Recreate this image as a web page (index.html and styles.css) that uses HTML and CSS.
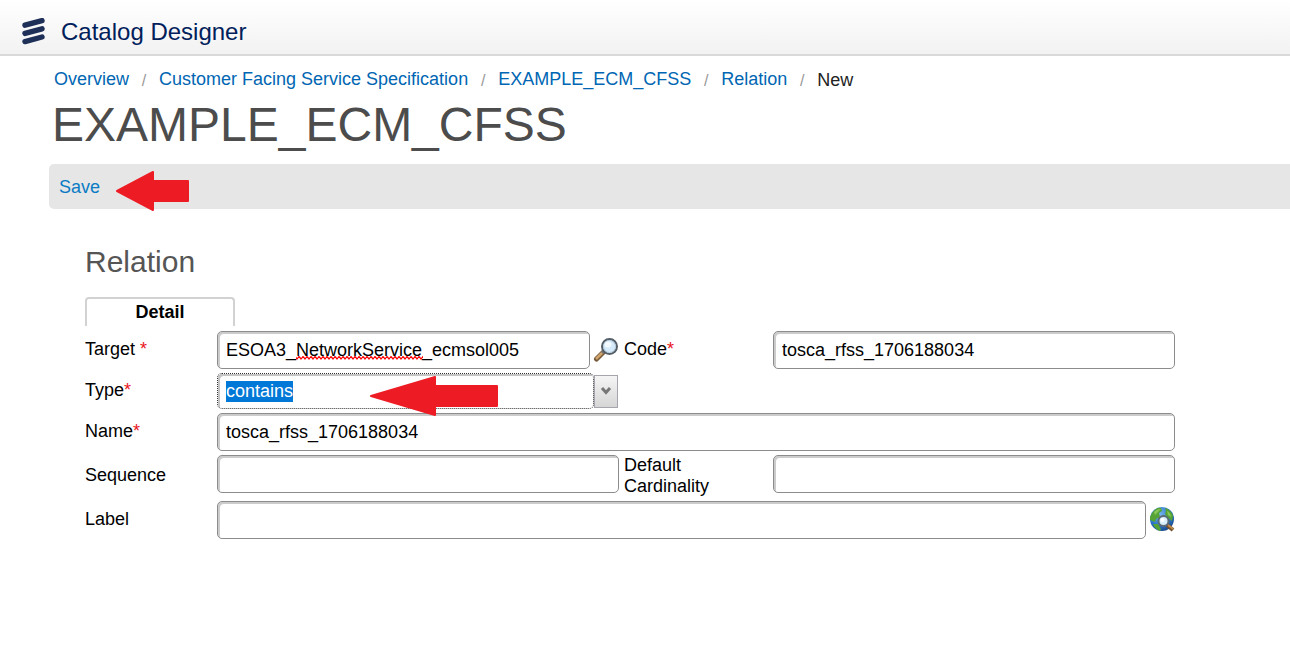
FILE: index.html
```html
<!DOCTYPE html>
<html lang="en">
<head>
<meta charset="utf-8">
<title>Catalog Designer</title>
<link rel="stylesheet" href="styles.css">
</head>
<body>
<header class="topbar">
  <svg class="logo" width="24" height="28" viewBox="0 0 24 28" aria-hidden="true">
    <g stroke="#1f3058" stroke-width="5.4" stroke-linecap="round">
      <path d="M4 7.200 21 2.600M4 15.400 21 10.800M4 23.600 21 19"/>
    </g>
  </svg>
  <span class="product">Catalog Designer</span>
</header>

<main class="page">
  <nav class="crumbs" aria-label="Breadcrumb">
    <a href="#">Overview</a><span class="sep">/</span>
    <a href="#">Customer Facing Service Specification</a><span class="sep">/</span>
    <a href="#">EXAMPLE_ECM_CFSS</a><span class="sep">/</span>
    <a href="#">Relation</a><span class="sep">/</span>
    <span class="current">New</span>
  </nav>
  <h1 class="title">EXAMPLE_ECM_CFSS</h1>

  <div class="toolbar">
    <button class="save" type="button">Save</button>
    <svg class="arrow arrow-save" width="73" height="40" viewBox="0 0 73 40" aria-hidden="true">
      <path d="M1 20 37 1V10H72V30H37V39Z" fill="#ed1c24" stroke="#ed1c24" stroke-width="2" stroke-linejoin="round"/>
    </svg>
  </div>

  <section class="panel">
    <h2 class="subtitle">Relation</h2>
    <button class="tab" type="button">Detail</button>

    <form class="form">
      <label for="target">Target <span class="req">*</span></label>
      <div class="field">
        <div class="spell">
          <input class="text" id="target" type="text" value="ESOA3_NetworkService_ecmsol005" spellcheck="false">
          <svg class="squiggle" width="127" height="4" aria-hidden="true">
            <defs><pattern id="wave" width="4" height="4" patternUnits="userSpaceOnUse"><path d="M-1 0 1 3 3 .5 5 3" fill="none" stroke="#f00" stroke-width="1.2"/></pattern></defs>
            <rect width="127" height="4" fill="url(#wave)"/>
          </svg>
        </div>
        <button class="icon" type="button" aria-label="Find target">
          <svg width="26" height="26" viewBox="0 0 26 26">
            <path d="M10 15.500 3.500 22" stroke="#76583a" stroke-width="5" stroke-linecap="round"/>
            <path d="M9.500 15.500 3 22" stroke="#d0a56b" stroke-width="2.500"/>
            <path d="m9 16 3-3" stroke="#777" stroke-width="3"/>
            <circle cx="16.500" cy="9.500" r="7.500" fill="#d5eafa" stroke="#555e66" stroke-width="2"/>
            <circle cx="16.500" cy="9.500" r="6" fill="none" stroke="#b2cadb" stroke-width="1"/>
            <ellipse cx="15" cy="7.500" rx="3.500" ry="3" fill="#f3faff"/>
          </svg>
        </button>
      </div>
      <label class="second" for="code">Code<span class="req">*</span></label>
      <div class="field"><input class="text" id="code" type="text" value="tosca_rfss_1706188034"></div>

      <label for="type">Type<span class="req">*</span></label>
      <div class="field combo">
        <input class="text active" id="type" type="text" value="contains" role="combobox" aria-expanded="false">
        <button class="drop" type="button" aria-label="Show types">
          <svg width="12" height="10" viewBox="0 0 12 10"><path d="m2 2 4 4.500L10 2" fill="none" stroke="#777" stroke-width="3"/></svg>
        </button>
        <svg class="arrow arrow-type" width="128" height="40" viewBox="0 0 128 40" aria-hidden="true">
          <path d="M1 20 65 1V10H127V30H65V39Z" fill="#ed1c24" stroke="#ed1c24" stroke-width="2" stroke-linejoin="round"/>
        </svg>
      </div>

      <label class="first" for="name">Name<span class="req">*</span></label>
      <div class="field wide"><input class="text" id="name" type="text" value="tosca_rfss_1706188034"></div>

      <label for="sequence">Sequence</label>
      <div class="field high"><input class="text" id="sequence" type="text"></div>
      <label class="second lines" for="cardinality">Default<br>Cardinality</label>
      <div class="field high"><input class="text" id="cardinality" type="text"></div>

      <label class="first" for="label">Label</label>
      <div class="field wide">
        <input class="text" id="label" type="text">
        <button class="icon" type="button" aria-label="Translate label">
          <svg width="26" height="26" viewBox="0 0 26 26">
            <defs><radialGradient id="sea" cx=".4" cy=".3" r=".8"><stop offset="0" stop-color="#78b9ee"/><stop offset=".6" stop-color="#2873c8"/><stop offset="1" stop-color="#153d78"/></radialGradient></defs>
            <circle cx="13" cy="12" r="12" fill="url(#sea)"/>
            <path d="M3 6C6 2 9 0 12 1l1 3-3 2 1 4-4 2-1 3-5-2 0-3ZM16 1c4 1 7 4 8 8l-1 5-4-3-3-4 1-3ZM4 17l5 0 3 5-1 2c-3-1-6-4-7-7Z" fill="#55a336"/>
            <path d="M5 5c2-2 4-3 7-3L9 5l-3 3ZM18 4c2 1 4 3 4 6l-3-2Z" fill="#8ac65a"/>
            <path d="m18 18 6 5" stroke="#70502c" stroke-width="4"/>
            <path d="m19 18 5 4" stroke="#c18a4b" stroke-width="2"/>
            <circle cx="14.500" cy="14" r="5" fill="#d7effb" stroke="#5b6b75" stroke-width="2"/>
            <circle cx="13.500" cy="13" r="2" fill="#fff"/>
          </svg>
        </button>
      </div>
    </form>
  </section>
</main>
<script src="app.js"></script>
</body>
</html>
```
FILE: styles.css
```css
* { box-sizing: border-box; }
body {
  margin: 0;
  background: #fff;
  color: #000;
  font: 18px/21px "Liberation Sans", Arial, sans-serif;
}
button, input { font: inherit; }
button { padding: 0; border: 0; background: none; cursor: pointer; }
svg { display: block; }

.topbar {
  display: flex;
  align-items: center;
  gap: 16px;
  height: 56px;
  padding: 10px 21px 0;
  border-bottom: 2px solid #d9d9d9;
  background: linear-gradient(#fff, #f2f2f2);
}
.product { color: #00205b; font-size: 24px; line-height: 28px; }

.page { padding-left: 49px; }
.crumbs { display: flex; padding: 13px 5px 0; }
.crumbs a { color: #0066b3; text-decoration: none; }
.sep { width: 30px; color: #999; font-size: 16px; line-height: 24px; text-align: center; }
.current { color: #222; line-height: 23px; }
.title {
  margin: 4px 0 11px 3px;
  color: #4c4c4c;
  font-size: 48px;
  font-weight: 400;
  line-height: 56px;
}
.toolbar {
  position: relative;
  display: flex;
  align-items: center;
  height: 45px;
  padding: 1px 0 0 10px;
  border-radius: 5px 0 0 5px;
  background: #e6e6e6;
}
.save { color: #0a7bc4; }
.arrow { position: absolute; pointer-events: none; }
.arrow-save { left: 67px; top: 7px; }

.panel { padding: 36px 115px 36px 36px; }
.subtitle {
  margin: 0 0 18px;
  color: #555;
  font-size: 30px;
  font-weight: 400;
  line-height: 34px;
}
.tab {
  display: block;
  width: 150px;
  height: 29px;
  border: 2px solid #d2d2d2;
  border-bottom: 0;
  border-radius: 4px 4px 0 0;
  color: #000;
  font-weight: 700;
}

.form {
  display: grid;
  grid-template-columns: 132px 1fr 154px 1fr;
  align-items: center;
  row-gap: 4px;
  margin-top: 5px;
}
.form label { padding-bottom: 2px; }
.form .lines { padding-bottom: 0; }
.first { grid-column: 1; }
.second { padding-left: 5px; }
.req { color: #e8141c; }
.field { display: flex; align-items: center; gap: 3px; min-width: 0; }
.wide { grid-column: 2 / -1; }
.high { align-self: start; }
.text {
  flex: 1;
  width: 100%;
  min-width: 0;
  height: 38px;
  padding: 0 8px;
  border: 1px solid #8c8c8c;
  border-radius: 5px;
  outline: 0;
  background: #fff;
  box-shadow: inset 2px 2px 0 #ccc;
  color: #000;
}
.text::selection { background: #0078d7; color: #fff; }
.active { height: 36px; border: 1px dotted #333; box-shadow: inset 2px 2px 0 #c4c4c4; }
.spell { position: relative; display: flex; flex: 1; min-width: 0; }
.squiggle { position: absolute; left: 79px; top: 25px; pointer-events: none; }
.icon { flex: none; width: 26px; height: 26px; }
.combo { position: relative; gap: 0; padding-right: 1px; }
.drop {
  display: grid;
  place-items: center;
  width: 24px;
  height: 33px;
  border: 1px solid #a5a5ad;
  background: linear-gradient(#f5f5f5, #d6d6d6);
}
.arrow-type { left: 153px; top: 3px; z-index: 1; }
```
FILE: app.js
```js
const type = document.getElementById("type");
type.focus();
type.select();
```
